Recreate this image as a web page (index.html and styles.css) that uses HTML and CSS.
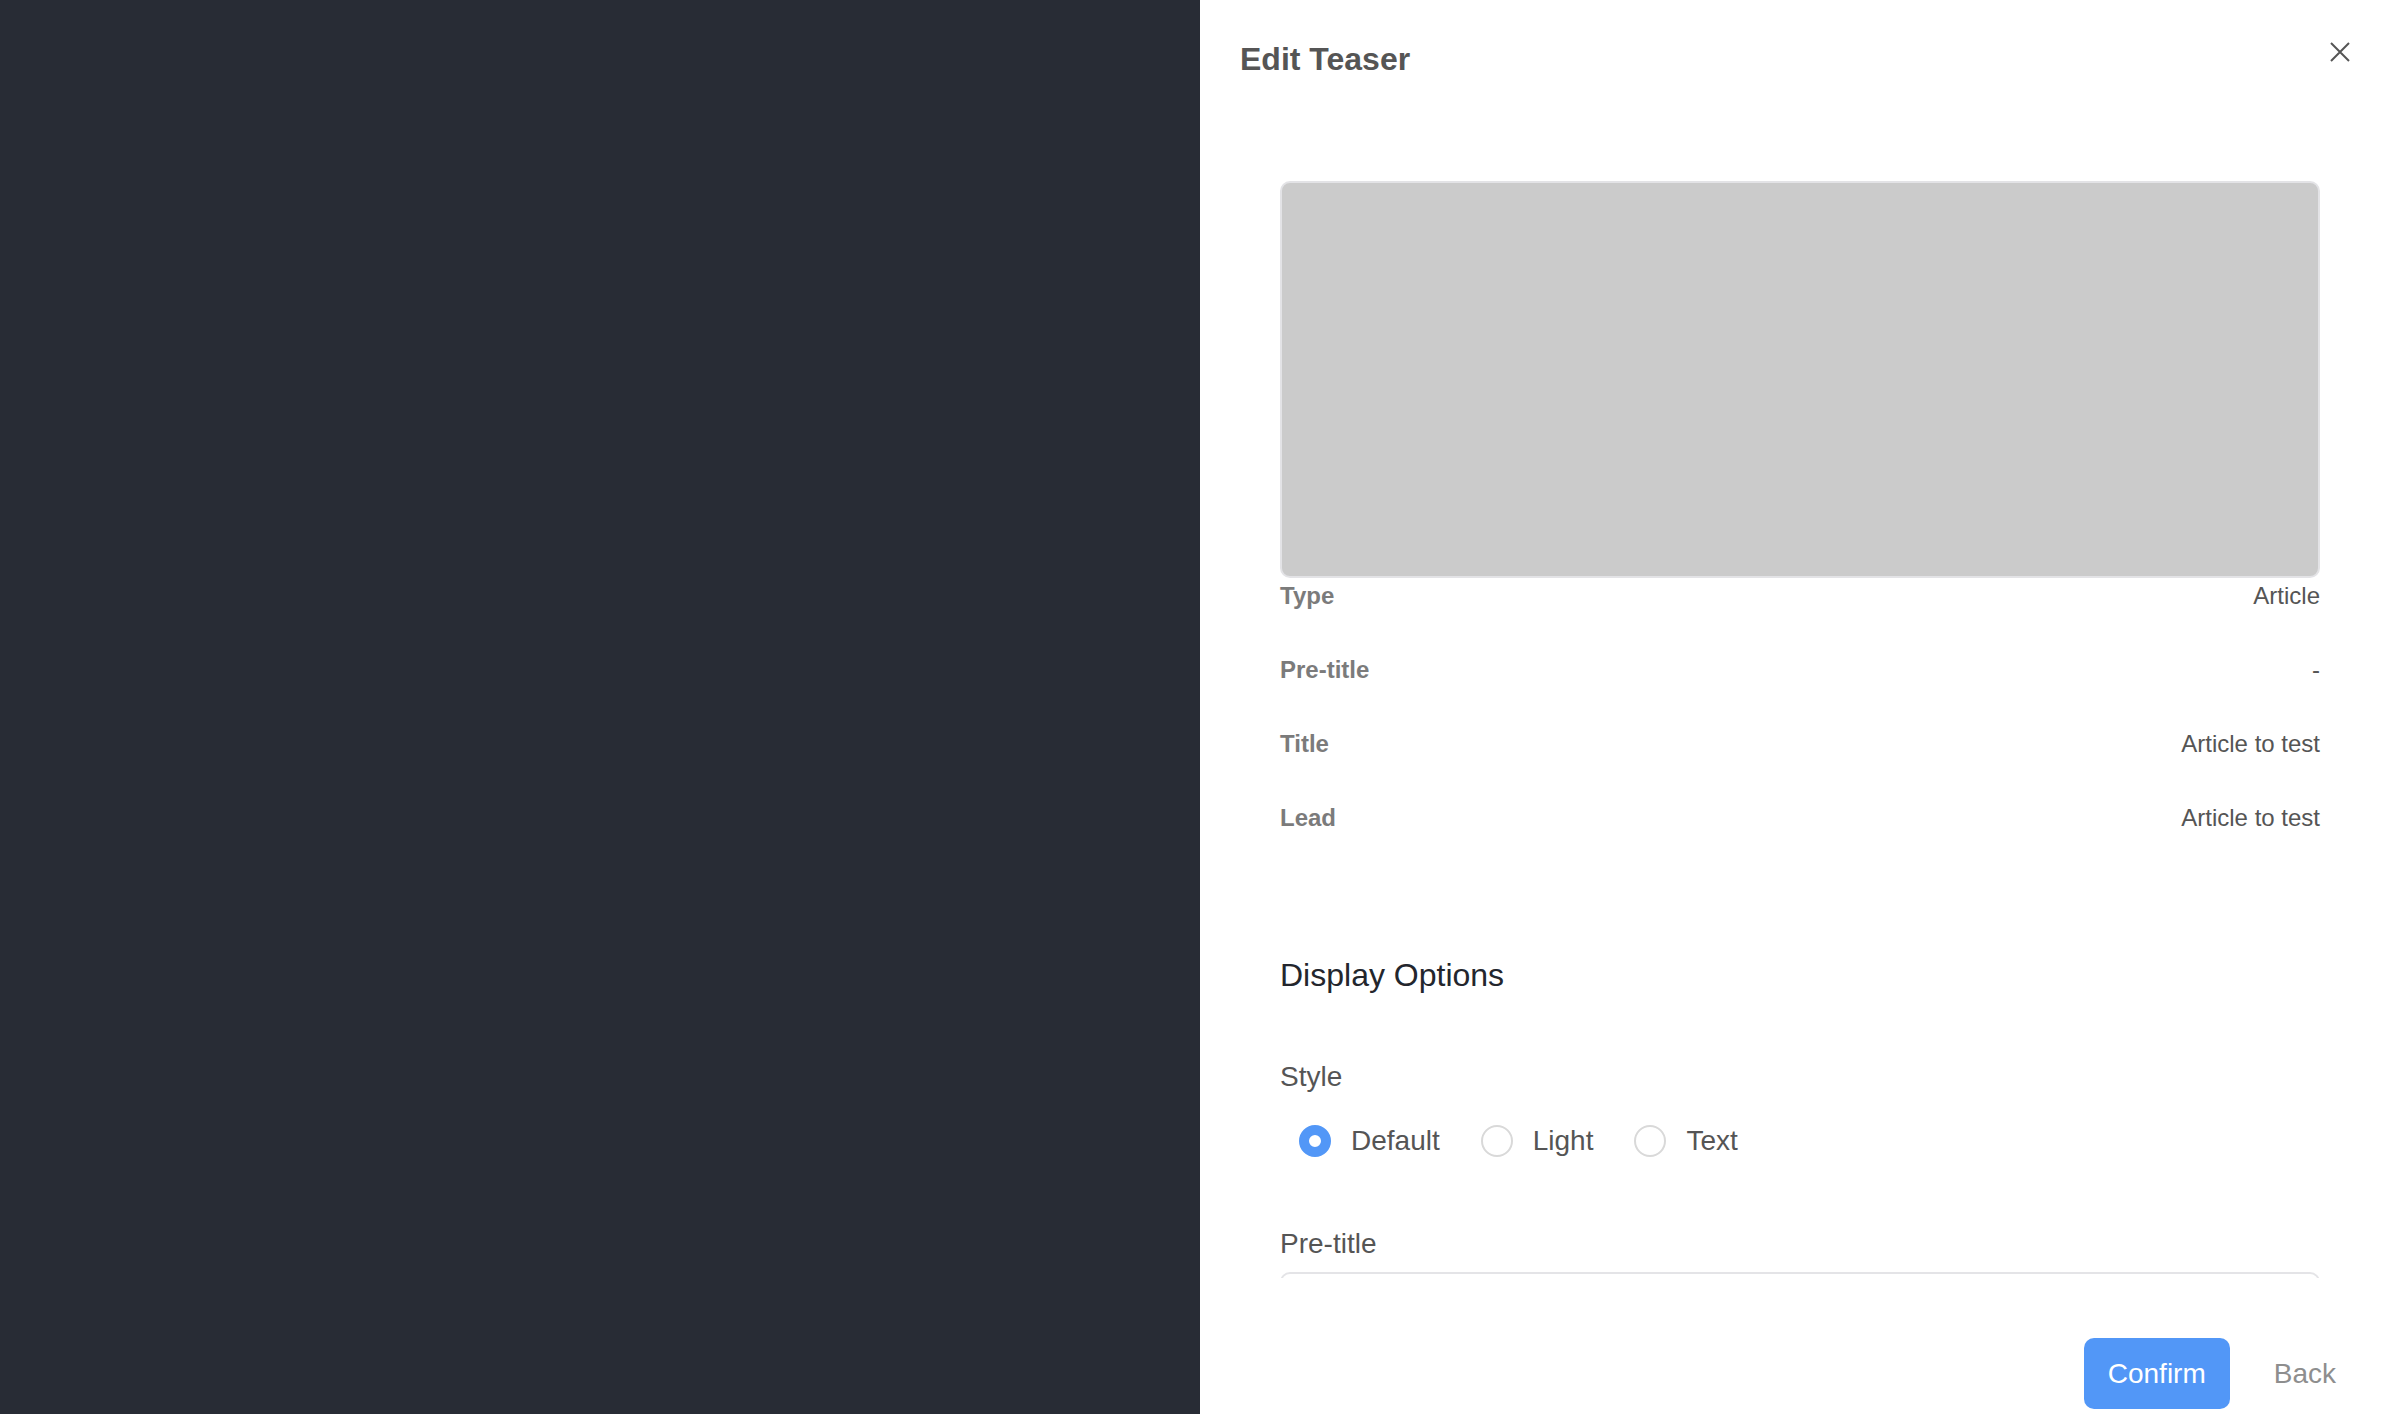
FILE: index.html
```html
<!DOCTYPE html>
<html lang="en">
<head>
<meta charset="utf-8">
<title>Edit Teaser</title>
<link rel="stylesheet" href="styles.css">
</head>
<body>
<div class="app">
  <div class="backdrop"></div>
  <aside class="panel">
    <header class="panel-header">
      <h1 class="panel-title">Edit Teaser</h1>
      <button class="close-btn" aria-label="Close">
        <svg width="20" height="20" viewBox="0 0 20 20"><path d="M1 1 L19 19 M19 1 L1 19" stroke="#555" stroke-width="2" fill="none"/></svg>
      </button>
    </header>
    <div class="panel-body">
      <div class="preview"></div>
      <dl class="details">
        <div class="row"><dt>Type</dt><dd>Article</dd></div>
        <div class="row"><dt>Pre-title</dt><dd>-</dd></div>
        <div class="row"><dt>Title</dt><dd>Article to test</dd></div>
        <div class="row"><dt>Lead</dt><dd>Article to test</dd></div>
      </dl>
      <h2 class="section-title">Display Options</h2>
      <div class="field-label">Style</div>
      <div class="radio-group">
        <label class="radio"><span class="radio-dot checked"></span><span class="radio-text">Default</span></label>
        <label class="radio"><span class="radio-dot"></span><span class="radio-text">Light</span></label>
        <label class="radio"><span class="radio-dot"></span><span class="radio-text">Text</span></label>
      </div>
      <div class="field-label pretitle-label">Pre-title</div>
      <div class="text-input"></div>
    </div>
    <footer class="panel-footer">
      <button class="btn-primary">Confirm</button>
      <button class="btn-link">Back</button>
    </footer>
  </aside>
</div>
</body>
</html>
```
FILE: styles.css
```css
* { box-sizing: border-box; }
html, body { margin: 0; padding: 0; height: 100%; }
body {
  font-family: "Liberation Sans", Arial, Helvetica, sans-serif;
  color: #555;
  overflow: hidden;
}
.app {
  display: flex;
  height: 100vh;
}
.backdrop {
  flex: 1;
  background: #282c35;
}
.panel {
  width: 1200px;
  background: #fff;
  display: flex;
  flex-direction: column;
  height: 100vh;
}
.panel-header {
  display: flex;
  justify-content: space-between;
  align-items: flex-start;
  padding: 37px 50px 0 40px;
}
.panel-title {
  margin: 0;
  font-size: 32px;
  line-height: 45px;
  font-weight: 700;
  color: #555;
}
.close-btn {
  border: 0;
  background: none;
  padding: 0;
  margin-top: 5px;
  width: 20px;
  height: 20px;
  display: block;
}
.close-btn svg { display: block; }
.panel-body {
  flex: 1;
  overflow: hidden;
  padding: 99px 80px 0;
}
.preview {
  height: 397px;
  background: #cbcbcb;
  border: 2px solid #e3e3e6;
  border-radius: 10px;
}
.details {
  margin: 2px 0 0;
}
.row {
  display: flex;
  justify-content: space-between;
  font-size: 24px;
  line-height: 32px;
  margin-bottom: 42px;
}
.row:last-child { margin-bottom: 0; }
.row dt {
  font-weight: 700;
  color: #7b7b7b;
}
.row dd {
  margin: 0;
  color: #555;
}
.section-title {
  margin: 119px 0 0;
  font-size: 32px;
  line-height: 44px;
  font-weight: 400;
  color: #23262d;
}
.field-label {
  margin-top: 60px;
  font-size: 28px;
  line-height: 40px;
  color: #555;
}
.radio-group {
  display: flex;
  margin-top: 28px;
  padding-left: 19px;
  gap: 41px;
}
.radio {
  display: flex;
  align-items: center;
  gap: 20px;
  font-size: 28px;
  line-height: 32px;
  color: #555;
}
.radio-dot {
  width: 32px;
  height: 32px;
  border-radius: 50%;
  border: 2px solid #d9d9d9;
  background: #fff;
}
.radio-dot.checked {
  border: 10px solid #5297f7;
  background: #fff;
}
.pretitle-label {
  margin-top: 67px;
}
.text-input {
  margin-top: 8px;
  height: 60px;
  border: 2px solid #e4e4e7;
  border-radius: 10px;
}
.panel-footer {
  height: 136px;
  flex-shrink: 0;
  display: flex;
  justify-content: flex-end;
  align-items: flex-start;
  padding: 60px 64px 0 0;
  gap: 44px;
}
.btn-primary {
  height: 71px;
  width: 146px;
  border: 0;
  border-radius: 10px;
  background: #5297f7;
  color: #fff;
  font-family: inherit;
  font-size: 28px;
}
.btn-link {
  height: 71px;
  border: 0;
  background: none;
  padding: 0;
  color: #8e8e8e;
  font-family: inherit;
  font-size: 28px;
}
```
